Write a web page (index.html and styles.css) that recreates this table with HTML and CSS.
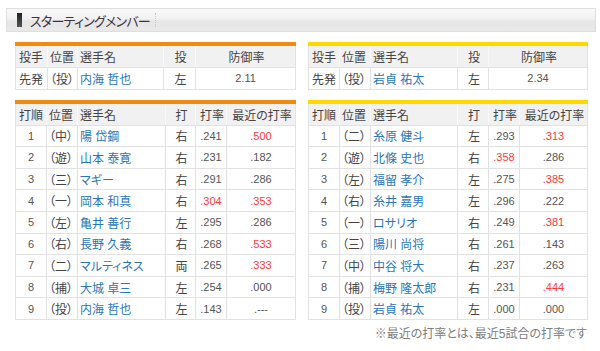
FILE: index.html
```html
<!DOCTYPE html>
<html lang="ja">
<head>
<meta charset="utf-8">
<link rel="stylesheet" href="styles.css">
</head>
<body>
<div class="title-bar">
  <span class="title-mark"></span>
  <span class="title-text">スターティングメンバー</span>
  <span class="title-sep"></span>
</div>
<div class="content">
  <table class="tbl home">
    <colgroup><col style="width:32px"><col style="width:30px"><col style="width:86px"><col style="width:32px"><col style="width:100px"></colgroup>
    <tr><th class="l">投手</th><th class="l">位置</th><th class="l">選手名</th><th>投</th><th>防御率</th></tr>
    <tr><td class="l">先発</td><td class="l">（投）</td><td class="l name">内海 哲也</td><td>左</td><td class="num">2.11</td></tr>
  </table>
  <table class="tbl away">
    <colgroup><col style="width:31px"><col style="width:31px"><col style="width:87px"><col style="width:31px"><col style="width:99px"></colgroup>
    <tr><th class="l">投手</th><th class="l">位置</th><th class="l">選手名</th><th>投</th><th>防御率</th></tr>
    <tr><td class="l">先発</td><td class="l">（投）</td><td class="l name">岩貞 祐太</td><td>左</td><td class="num">2.34</td></tr>
  </table>

  <table class="tbl home">
    <colgroup><col style="width:31px"><col style="width:31px"><col style="width:88px"><col style="width:30px"><col style="width:31px"><col style="width:69px"></colgroup>
    <tr><th class="l">打順</th><th class="l">位置</th><th class="l">選手名</th><th>打</th><th>打率</th><th>最近の打率</th></tr>
    <tr><td class="num">1</td><td class="l">（中）</td><td class="l name">陽 岱鋼</td><td>右</td><td class="num">.241</td><td class="num red">.500</td></tr>
    <tr><td class="num">2</td><td class="l">（遊）</td><td class="l name">山本 泰寛</td><td>右</td><td class="num">.231</td><td class="num">.182</td></tr>
    <tr><td class="num">3</td><td class="l">（三）</td><td class="l name">マギー</td><td>右</td><td class="num">.291</td><td class="num">.286</td></tr>
    <tr><td class="num">4</td><td class="l">（一）</td><td class="l name">岡本 和真</td><td>右</td><td class="num red">.304</td><td class="num red">.353</td></tr>
    <tr><td class="num">5</td><td class="l">（左）</td><td class="l name">亀井 善行</td><td>左</td><td class="num">.295</td><td class="num">.286</td></tr>
    <tr><td class="num">6</td><td class="l">（右）</td><td class="l name">長野 久義</td><td>右</td><td class="num">.268</td><td class="num red">.533</td></tr>
    <tr><td class="num">7</td><td class="l">（二）</td><td class="l name">マルティネス</td><td>両</td><td class="num">.265</td><td class="num red">.333</td></tr>
    <tr><td class="num">8</td><td class="l">（捕）</td><td class="l name">大城 卓三</td><td>左</td><td class="num">.254</td><td class="num">.000</td></tr>
    <tr><td class="num">9</td><td class="l">（投）</td><td class="l name">内海 哲也</td><td>左</td><td class="num">.143</td><td class="num">.---</td></tr>
  </table>
  <table class="tbl away">
    <colgroup><col style="width:31px"><col style="width:31px"><col style="width:87px"><col style="width:31px"><col style="width:31px"><col style="width:68px"></colgroup>
    <tr><th class="l">打順</th><th class="l">位置</th><th class="l">選手名</th><th>打</th><th>打率</th><th>最近の打率</th></tr>
    <tr><td class="num">1</td><td class="l">（二）</td><td class="l name">糸原 健斗</td><td>左</td><td class="num">.293</td><td class="num red">.313</td></tr>
    <tr><td class="num">2</td><td class="l">（遊）</td><td class="l name">北條 史也</td><td>右</td><td class="num red">.358</td><td class="num">.286</td></tr>
    <tr><td class="num">3</td><td class="l">（左）</td><td class="l name">福留 孝介</td><td>左</td><td class="num">.275</td><td class="num red">.385</td></tr>
    <tr><td class="num">4</td><td class="l">（右）</td><td class="l name">糸井 嘉男</td><td>左</td><td class="num">.296</td><td class="num">.222</td></tr>
    <tr><td class="num">5</td><td class="l">（一）</td><td class="l name">ロサリオ</td><td>右</td><td class="num">.249</td><td class="num red">.381</td></tr>
    <tr><td class="num">6</td><td class="l">（三）</td><td class="l name">陽川 尚将</td><td>右</td><td class="num">.261</td><td class="num">.143</td></tr>
    <tr><td class="num">7</td><td class="l">（中）</td><td class="l name">中谷 将大</td><td>右</td><td class="num">.237</td><td class="num">.263</td></tr>
    <tr><td class="num">8</td><td class="l">（捕）</td><td class="l name">梅野 隆太郎</td><td>右</td><td class="num">.231</td><td class="num red">.444</td></tr>
    <tr><td class="num">9</td><td class="l">（投）</td><td class="l name">岩貞 祐太</td><td>左</td><td class="num">.000</td><td class="num">.000</td></tr>
  </table>
  <p class="note">※最近の打率とは、最近5試合の打率です</p>
</div>
</body>
</html>
```

FILE: styles.css
```css
html, body {
  margin: 0;
  padding: 0;
  background: #ffffff;
}
body {
  font-family: "Liberation Sans", "Noto Sans CJK JP", sans-serif;
  font-feature-settings: "palt";
  color: #444;
  font-size: 12px;
}
.title-bar {
  margin: 8px 4px 0 6px;
  height: 22px;
  border: 1px solid #dedede;
  background: linear-gradient(#f9f9f9 0%, #f1f1f1 45%, #e6e6e6 55%, #e9e9e9 100%);
  display: flex;
  align-items: center;
  padding-left: 10px;
}
.title-mark {
  width: 5px;
  height: 14px;
  background: linear-gradient(#222, #555);
}
.title-text {
  margin-left: 8px;
  font-size: 13px;
  color: #3b3340;
  font-family: "Noto Sans CJK JP", sans-serif;
  font-feature-settings: "palt";
  letter-spacing: -0.75px;
}
.title-sep {
  margin-left: 5px;
  width: 0;
  height: 14px;
  border-left: 1px dotted #c8c8c8;
}
.content {
  display: grid;
  grid-template-columns: 280px 279px;
  column-gap: 13px;
  row-gap: 10px;
  padding: 10px 13px 0 15px;
}
.tbl {
  border-collapse: collapse;
  table-layout: fixed;
  width: 100%;
  border-top: 4px solid #f08a12;
}
.tbl.away {
  border-top-color: #ffd800;
}
.tbl th, .tbl td {
  border: 1px solid #e2e2e2;
  padding: 0 0 0 2px;
  text-align: center;
  white-space: nowrap;
  overflow: hidden;
  font-weight: normal;
}
.tbl th {
  height: 21px;
  background: #f1f1f1;
  color: #444;
  border-left-color: #f8f8f8;
  border-right-color: #f8f8f8;
}
.tbl th:first-child { border-left-color: #e2e2e2; }
.tbl th:last-child { border-right-color: #e2e2e2; }
.tbl td {
  height: 20.6px;
  color: #444;
}
.tbl .l {
  text-align: left;
}
.tbl th:first-child.l, .tbl td:first-child.l {
  padding-left: 3px;
}
.tbl .name {
  color: #2b76b8;
}
.tbl .num {
  font-size: 11px;
  color: #555;
  padding-left: 0;
}
.tbl .red {
  color: #ff3a3a;
}
.note {
  grid-column: 1 / 3;
  margin: -6px 0 0;
  text-align: right;
  color: #808080;
  font-size: 12px;
}
```
